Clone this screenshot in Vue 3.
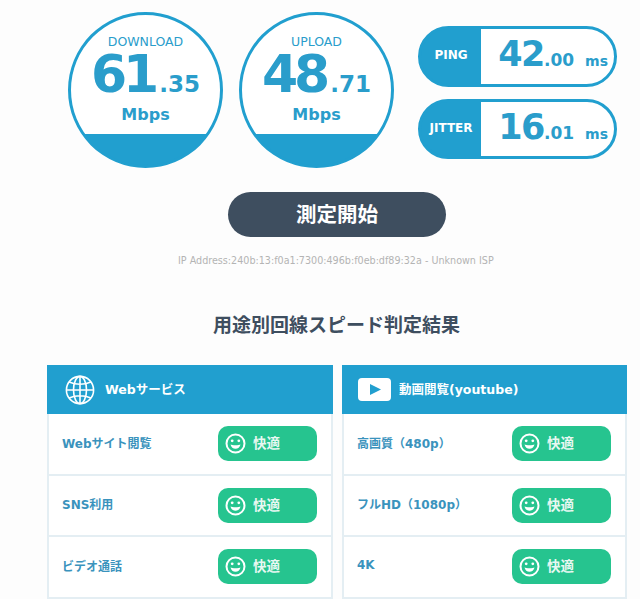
<template>
  <div class="page">
    <div class="meters">
      <div v-for="m in speeds" :key="m.label" class="circle">
        <div class="circle-label">{{ m.label }}</div>
        <div class="circle-value">{{ m.whole }}<span class="circle-dec">.{{ m.dec }}</span></div>
        <div class="circle-unit">Mbps</div>
      </div>
      <div class="pills">
        <div v-for="p in latency" :key="p.label" class="pill">
          <div class="pill-label">{{ p.label }}</div>
          <div class="pill-value">
            <span class="pill-whole">{{ p.whole }}</span><span class="pill-dec">.{{ p.dec }}</span><span class="pill-unit">ms</span>
          </div>
        </div>
      </div>
    </div>

    <button class="start">測定開始</button>
    <p class="ip">IP Address:240b:13:f0a1:7300:496b:f0eb:df89:32a - Unknown ISP</p>
    <h2 class="title">用途別回線スピード判定結果</h2>

    <div class="cards">
      <section v-for="c in cards" :key="c.title" class="card">
        <header class="card-head">
          <svg v-if="c.icon === 'globe'" class="globe" viewBox="0 0 30 30" fill="none" stroke="#fff" stroke-width="1.6">
            <circle cx="15" cy="15" r="13.6" />
            <ellipse cx="15" cy="15" rx="6.5" ry="13.6" />
            <path d="M15 1.4v27.2M1.4 15h27.2M4 7Q15 11.5 26 7M4 23Q15 18.5 26 23" />
          </svg>
          <svg v-else class="play" viewBox="0 0 33 23">
            <rect width="33" height="23" rx="4" fill="#fff" />
            <path d="M12 6l11 5.5L12 17z" fill="#219fcf" />
          </svg>
          <span class="head-text">{{ c.title }}</span>
        </header>
        <div v-for="r in c.rows" :key="r" class="row">
          <span class="row-name">{{ r }}</span>
          <span class="badge">
            <svg class="smile" viewBox="0 0 21 21" fill="none" stroke="#fff">
              <circle cx="10.5" cy="10.5" r="9" stroke-width="2" />
              <circle cx="7.2" cy="7.8" r="1.4" fill="#fff" stroke="none" />
              <circle cx="13.8" cy="7.8" r="1.4" fill="#fff" stroke="none" />
              <path d="M5.5 11.5c1.5 1 8.5 1 10 0-.6 2.8-2.6 4.3-5 4.3s-4.4-1.5-5-4.3z" fill="#fff" stroke="none" />
            </svg>
            <span class="badge-text">快適</span>
          </span>
        </div>
      </section>
    </div>
  </div>
</template>

<script setup>
const speeds = [
  { label: 'DOWNLOAD', whole: '61', dec: '35' },
  { label: 'UPLOAD', whole: '48', dec: '71' },
];

const latency = [
  { label: 'PING', whole: '42', dec: '00' },
  { label: 'JITTER', whole: '16', dec: '01' },
];

const cards = [
  { title: 'Webサービス', icon: 'globe', rows: ['Webサイト閲覧', 'SNS利用', 'ビデオ通話'] },
  { title: '動画閲覧(youtube)', icon: 'play', rows: ['高画質（480p）', 'フルHD（1080p）', '4K'] },
];
</script>

<style>
html, body {
  margin: 0;
  background: #fdfdfd;
}
</style>

<style scoped>
.page {
  height: 599px;
  overflow: hidden;
  padding-top: 12px;
  box-sizing: border-box;
  font-family: "DejaVu Sans", "Noto Sans CJK JP", sans-serif;
  color: #2a9dcb;
}
.meters {
  display: flex;
  padding-left: 68px;
  gap: 16px;
}
.circle {
  width: 155px;
  height: 156px;
  box-sizing: border-box;
  border: 3.5px solid #219fcf;
  border-radius: 50%;
  text-align: center;
  background: linear-gradient(#fff 119.5px, #219fcf 119.5px);
}
.circle-label {
  margin-top: 20px;
  font-size: 12.5px;
  line-height: 14px;
}
.circle-value {
  font-size: 52px;
  font-weight: 700;
  line-height: 50px;
  letter-spacing: -4px;
  white-space: nowrap;
}
.circle-dec {
  font-size: 23px;
  line-height: 1;
  letter-spacing: 0;
  margin-left: 4px;
}
.circle-unit {
  margin-top: 5px;
  font-size: 16px;
  font-weight: 700;
  line-height: 22px;
}
.pills {
  display: flex;
  flex-direction: column;
  gap: 12px;
  margin: 14px 0 0 8px;
}
.pill {
  display: flex;
  width: 199px;
  height: 60.5px;
  box-sizing: border-box;
  border: 3px solid #219fcf;
  border-radius: 31px;
  background: linear-gradient(90deg, #219fcf 60px, #fff 60px);
}
.pill-label {
  width: 60px;
  color: #fff;
  font-weight: 700;
  font-size: 12px;
  line-height: 52px;
  text-align: center;
}
.pill-value {
  flex: 1;
  display: flex;
  align-items: baseline;
  justify-content: flex-end;
  padding: 0 6px 0 0;
  font-weight: 700;
  line-height: 50px;
}
.pill-whole {
  font-size: 35px;
  letter-spacing: -1.5px;
}
.pill-dec {
  font-size: 17px;
}
.pill-unit {
  margin-left: 11px;
  font-size: 14px;
}
.start {
  display: block;
  width: 218px;
  height: 45px;
  margin: 24px 0 0 228px;
  padding: 0 0 3px;
  border: none;
  border-radius: 23px;
  background: #3e4e5f;
  color: #fff;
  font-family: inherit;
  font-weight: 700;
  font-size: 20.5px;
}
.ip {
  margin: 17px 0 0;
  padding-left: 178px;
  font-size: 9.6px;
  line-height: 14px;
  color: #b4b4b4;
}
.title {
  margin: 45px 0 0;
  padding-left: 213px;
  font-size: 19px;
  line-height: 24px;
  color: #3e4e5f;
}
.cards {
  display: flex;
  gap: 9px;
  margin: 28px 0 0 47px;
}
.card {
  width: 286px;
  box-sizing: border-box;
  border: 2px solid #e4eef3;
  border-top: none;
  background: #fff;
}
.card:last-child {
  width: 285px;
}
.card-head {
  display: flex;
  align-items: center;
  gap: 10px;
  height: 49px;
  margin: 0 -2px;
  padding-left: 18px;
  background: #219fcf;
  color: #fff;
  font-weight: 700;
  font-size: 12.5px;
}
.head-text {
  margin-top: -2px;
}
.globe {
  width: 30px;
  height: 30px;
}
.play {
  width: 33px;
  height: 23px;
  margin: 0 -2px;
}
.row {
  display: flex;
  align-items: center;
  justify-content: space-between;
  height: 61.5px;
  box-sizing: border-box;
  padding: 0 14px 0 13px;
  border-bottom: 2px solid #e4eef3;
  font-weight: 700;
  font-size: 12px;
  color: #3a93bd;
}
.row-name {
  margin-top: -3px;
}
.badge {
  display: flex;
  align-items: center;
  gap: 7px;
  width: 99px;
  height: 35px;
  box-sizing: border-box;
  padding-left: 7px;
  border-radius: 10px;
  background: #26c48f;
  color: #e8f8f2;
  font-size: 13.5px;
}
.badge-text {
  margin-top: -3px;
}
.smile {
  width: 21px;
  height: 21px;
}
</style>
